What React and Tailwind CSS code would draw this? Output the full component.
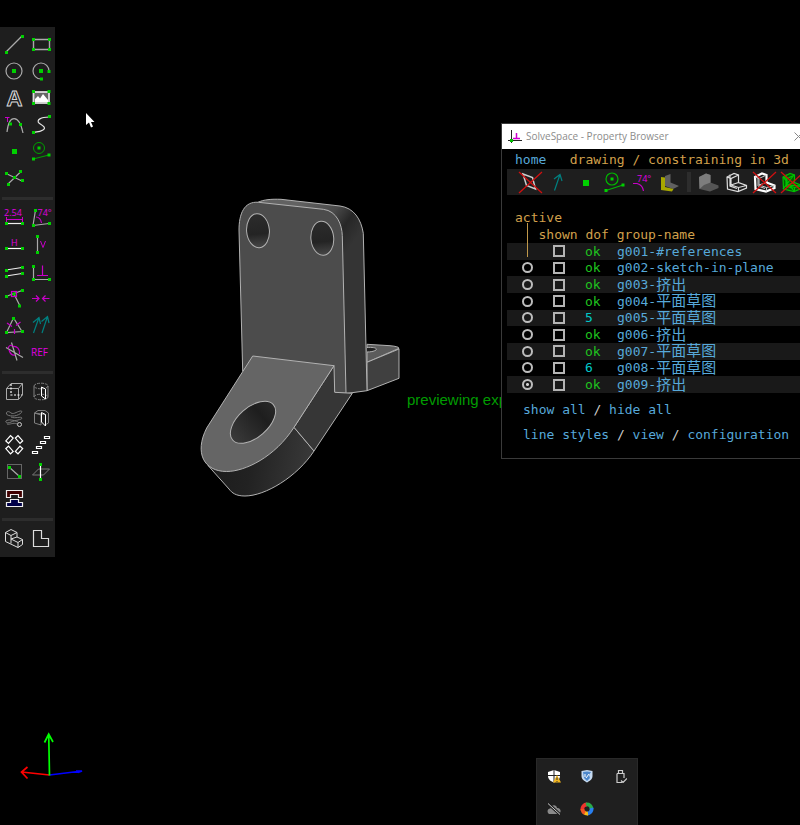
import React from "react";

const GREEN = "#00d000";
const MAGENTA = "#c800c8";

function Dots({ at, size = 3 }) {
  return at.map(([x, y]) => (
    <rect key={x + "-" + y} x={x - size / 2} y={y - size / 2} width={size} height={size} fill={GREEN} stroke="none" />
  ));
}

function Label({ x, y, size = 9, children }) {
  return (
    <text x={x} y={y} fontSize={size} fill="#e000e0" stroke="none" fontFamily="Open Sans, sans-serif">
      {children}
    </text>
  );
}

const sketchTools = [
  ["Line segment", <><path d="M6 22L22 6" /><Dots at={[[6.5, 22.5], [22.5, 6.5]]} /></>],
  ["Rectangle", <><path d="M6.500 9.500H22.500V19.500H6.500Z" strokeWidth="1.400" /><Dots at={[[6.5, 9.5], [22.5, 9.5], [6.5, 19.5], [22.5, 19.5]]} /></>],
  ["Circle", <><circle cx="14" cy="14" r="8" /><Dots at={[[14, 14]]} size={4} /></>],
  ["Arc", <><path d="M22 14A8 8 0 1 0 14 22" /><Dots at={[[14, 14]]} size={4} /><Dots at={[[22, 14.5], [14.5, 22]]} /></>],
  ["Text", <text x="14.500" y="22" textAnchor="middle" fontSize="22" fontWeight="bold" fontFamily="Liberation Sans, sans-serif" stroke="#d8d8d8" strokeWidth="1">A</text>],
  ["Image", <><rect x="6.500" y="8" width="15.500" height="11" fill="#666" stroke="#ddd" strokeWidth="1.800" /><path d="M8 18V15L11 12L13 14.500L16 10L21 16V18Z" fill="#fff" stroke="none" /><Dots at={[[6.5, 7.5], [22, 7.5], [6.5, 19.5], [22, 19.5]]} /></>],
  ["Tangent arc", <><path d="M7 21C9 3 19 3 23 22" /><path d="M5 6.500H9.500M7.500 6.500V11" stroke={MAGENTA} strokeWidth="1" /><Dots at={[[10.5, 13], [20.5, 13.5]]} /></>],
  ["Bezier spline", <><path d="M22 6C14 6 9 9 12 12C15 14 20 17 16 19C13 21 9 21 6 21.500" stroke="#e4e4e4" /><Dots at={[[22.5, 5.5], [6.5, 21.5]]} /></>],
  ["Point", <Dots at={[[14.5, 13.5]]} size={5} />],
  ["Construction", <g stroke="#00a000"><circle cx="12" cy="10" r="5.500" strokeWidth="1" /><path d="M6 21L22 17" /><Dots at={[[12, 10], [6.5, 21], [22, 17]]} /></g>],
  ["Split curves", <><path d="M6 8.500L22 16M8 19L21 6.500" /><Dots at={[[6.5, 8.5], [22.5, 15.5], [8.5, 19.5], [20.5, 6.5], [14.5, 12.5]]} /></>],
];

const constraintTools = [
  ["Distance", <><Label x="4" y="11.500">2.54</Label><path d="M6 15.500H22M6.500 13V18M22.500 13V18" stroke={MAGENTA} strokeWidth="1" /><path d="M6 19.500H22" stroke="#eee" /><Dots at={[[6.5, 19.5], [22.5, 19.5]]} /></>],
  ["Angle", <><Label x="10.500" y="11.500">74°</Label><path d="M6 21.500L8.500 6M6 21.500L22 19.500" /><path d="M9 13C12 13 14 16 14.500 19" stroke={MAGENTA} /><Dots at={[[8.5, 6.5], [6.5, 21.5], [22.5, 19.5]]} /></>],
  ["Horizontal", <><Label x="11" y="14.500">H</Label><path d="M6 17.500H22" stroke="#fff" /><Dots at={[[6.5, 17.5], [22.5, 17.5]]} /></>],
  ["Vertical", <><path d="M13.500 10L16 16.500L18.500 10" stroke={MAGENTA} strokeWidth="1" /><path d="M10.500 6V21" /><Dots at={[[10.5, 5.5], [10.5, 21.5]]} /></>],
  ["Parallel", <><path d="M6 12L22 9.500M6 18L22 15.500" stroke="#eee" /><Dots at={[[6.5, 12.5], [22.5, 9.5], [6.5, 18.5], [22.5, 15.5]]} /></>],
  ["Perpendicular", <><path d="M6.500 8V21.500H22" /><path d="M15.500 7.500V17.500M10 17.500H21" stroke={MAGENTA} /><Dots at={[[6.5, 8.5], [6.5, 21.5], [22.5, 21.5]]} /></>],
  ["Point on curve", <><path d="M6 11.500L22 5.500M14 9L20 21" /><rect x="11.500" y="6.500" width="5" height="5" stroke={MAGENTA} /><Dots at={[[6.5, 11.5], [22.5, 5.5], [14, 9], [19.5, 21]]} /></>],
  ["Symmetric", <path d="M5 13.500H12M9 10.500L12 13.500L9 16.500M22.500 13.500H15.500M18.500 10.500L15.500 13.500L18.500 16.500" stroke={MAGENTA} />],
  ["Equal length", <><path d="M13.500 6L6.500 20.500L22 19.500Z" /><path d="M7 11L12 14.500M20.500 10L16 13.500M14.500 17V22" stroke={MAGENTA} /><Dots at={[[13.5, 6.5], [6.5, 20.5], [22.5, 19.5]]} /></>],
  ["Same orientation", <path d="M6.500 21L12 5.500M6 10.500L12 5.500L13.500 12M15 21L20.500 4.500M14.500 9.500L20.500 4.500L22 11" stroke="#008080" />],
  ["Other supplementary angle", <><path d="M6 8.500L23 18.500M11.500 3.500L17 21.500" /><path d="M8 9.500C9 6 11 6 12.500 7M13 7.500C17 7 20 10 19.500 15M9 11C10 14 12 17 15 16" stroke={MAGENTA} /></>],
  ["Reference", <Label x="4" y="17" size={10}>REF</Label>],
];

const groupTools = [
  ["Extrude", <><path d="M6.500 10.500H18.500V21.500H6.500ZM6.500 10.500L11 5.500H22.500V17L18.500 21.500M18.500 10.500L22.500 5.500" stroke="#aaa" strokeWidth="1" /><path d="M11 6V17H22" stroke="#fff" strokeDasharray="2 1.500" /></>],
  ["Lathe", <><g stroke="#808080" strokeWidth="1"><ellipse cx="14" cy="8" rx="7" ry="2.800" strokeDasharray="3 1" /><path d="M7 8V19M21 8V19" /><ellipse cx="14" cy="19" rx="7" ry="2.800" strokeDasharray="3 1" /></g><path d="M14.500 9L18.500 11V21L14.500 18Z" stroke="#fff" strokeWidth="1" /></>],
  ["Helix", <><path d="M6.500 9C6 6 9 6 11 8C14 10 18 5.500 21.500 6C23 8 17 11 13 11C9 11 7 10 6.500 9M11 12C15 14 21 11 22 13C22 15 15 15 11 17C8 18.500 5 18 6 16C8 14 14 15 18 17M7 19C10 20 13 17 17 19" stroke="#777" strokeWidth="1" /><circle cx="19.500" cy="19.500" r="2" stroke="#ccc" strokeWidth="1" /></>],
  ["Revolve", <><path d="M7.500 8V18L14 20V10L7.500 8L11 5.500H18L21.500 8V18L18 20M7.500 8L18 9.500" stroke="#808080" strokeWidth="1" /><path d="M14.500 7.500L18.500 9.500V21L14.500 17Z" stroke="#fff" strokeWidth="1" /></>],
  ["Step rotating", <g stroke="#fff"><rect x="-3.500" y="-1.800" width="7" height="3.600" transform="translate(9.500 7.500) rotate(-48)" /><rect x="-3.500" y="-1.800" width="7" height="3.600" transform="translate(19 7.500) rotate(48)" /><rect x="-3.500" y="-1.800" width="7" height="3.600" transform="translate(9.500 18) rotate(48)" /><rect x="-3.500" y="-1.800" width="7" height="3.600" transform="translate(19 18) rotate(-48)" /></g>],
  ["Step translating", <path d="M17.500 4.500H22.500V6.500H17.500ZM13.500 9.500H18.500V11.500H13.500ZM9.500 14.500H14.500V16.500H9.500ZM5.500 19.500H10.500V21.500H5.500Z" stroke="#fff" />],
  ["Sketch in plane", <><rect x="7.500" y="5.500" width="14" height="14" stroke="#666" strokeWidth="1" /><path d="M9 8L19 17" /><Dots at={[[9.5, 8.5], [19.5, 17.5]]} /></>],
  ["Sketch in 3d", <><path d="M5.500 16L11.500 10H22.500L16.500 16Z" stroke="#777" strokeWidth="1" /><path d="M13.500 5V20" stroke="#fff" /><Dots at={[[13.5, 5.5], [13.5, 20.5]]} /></>],
  ["Link part", <><path d="M6.500 4.500H22.500V11.500H18.500V8.500H10.500V11.500H6.500Z" fill="#400000" stroke="#eee" /><path d="M10.500 13.500H18.500V16.500H22.500V20.500H6.500V16.500H10.500Z" fill="#000048" stroke="#eee" /></>],
];

const viewTools = [
  ["Nearest isometric view", <path d="M5.500 7.500L11 4.500L17 7.500L11 10.500ZM5.500 7.500V16.500L18 22.500L22.500 19.500V14.500L17 12V7.500M11 10.500V18.500M11 14L17 12M11 14L18 17.500V22.500M18 17.500L22.500 14.500" stroke="#ddd" strokeWidth="1" />],
  ["Nearest orthographic view", <path d="M6.500 5.500H14.500V13.500H21.500V21.500H6.500Z" stroke="#ddd" />],
];

function ToolGroup({ tools }) {
  return (
    <div className="grid w-[54px] grid-cols-2">
      {tools.map(([name, drawing]) => (
        <button key={name} type="button" aria-label={name} className="h-[27px] w-[27px]">
          <svg viewBox="0 0 27 27" className="block h-[27px] w-[27px]" fill="none" stroke="#aaa" strokeWidth="1.2">
            {drawing}
          </svg>
        </button>
      ))}
    </div>
  );
}

function Divider() {
  return (
    <div className="flex h-3 items-center px-0.5">
      <div className="h-[3px] w-full bg-[#2d2d2d]" />
    </div>
  );
}

function Toolbar() {
  return (
    <aside className="mt-[27px] w-[55px] self-start bg-[#1e1e1e] pt-[3px] pb-[5px]">
      <ToolGroup tools={sketchTools} />
      <Divider />
      <ToolGroup tools={constraintTools} />
      <Divider />
      <ToolGroup tools={groupTools} />
      <Divider />
      <ToolGroup tools={viewTools} />
    </aside>
  );
}

function Model() {
  return (
    <svg className="absolute top-[190px] left-[190px] h-[315px] w-[220px]" viewBox="190 190 220 315" role="img" aria-label="Bracket" strokeLinejoin="round">
      <defs>
        <linearGradient id="bend" x1="0" y1="0" x2="1" y2="0.1">
          <stop offset="0" stopColor="#1b1b1b" />
          <stop offset="0.45" stopColor="#222" />
          <stop offset="1" stopColor="#383838" />
        </linearGradient>
        <linearGradient id="bore" x1="0" y1="0" x2="1" y2="0">
          <stop offset="0" stopColor="#3a3a3a" />
          <stop offset="0.7" stopColor="#1e1e1e" />
          <stop offset="1" stopColor="#282828" />
        </linearGradient>
        <linearGradient id="drill" x1="0" y1="0" x2="0" y2="1">
          <stop offset="0" stopColor="#2c2c2c" />
          <stop offset="0.6" stopColor="#242424" />
          <stop offset="1" stopColor="#484848" />
        </linearGradient>
        <linearGradient id="edge" x1="300" y1="200" x2="355" y2="240" gradientUnits="userSpaceOnUse">
          <stop offset="0" stopColor="#626262" />
          <stop offset="0.5" stopColor="#4a4a4a" />
          <stop offset="0.75" stopColor="#272727" />
          <stop offset="1" stopColor="#343434" />
        </linearGradient>
      </defs>
      <g stroke="#b2b2b2" strokeWidth="1">
        <path d="M367 344.300L390 345.700Q399 346.500 399 348.300L367 362.300Z" fill="#5c5c5c" />
        <path d="M367 362.300L399 349V378.300L367 390.700Z" fill="#404040" />
        <path d="M367 347.500C373 347 378 348 376 350C374 351.500 370 352 367 352" fill="#222" />
        <path d="M258 202.300C264 199.500 271 199 281 199.300L340 206C354 208 361 219 363.300 233.300L367 390.700L346 393.500L300 300Z" fill="url(#edge)" />
        <path d="M242.700 371L239 230C239 214 244 201 258.500 202.300L323.300 209.300C337 211 342 225 342.300 235.700L346 393.300L334.700 392.500L330 366Z" fill="#4c4c4c" />
        <g fill="url(#drill)">
          <ellipse cx="258" cy="230.700" rx="11.400" ry="17" transform="rotate(-5 258 230.700)" />
          <ellipse cx="322.300" cy="238.300" rx="11.400" ry="17" transform="rotate(-5 322.300 238.300)" />
        </g>
        <path d="M294 427.300L314 451C297 477 265 496 245 496C236 496 232 493 229 489L208 465.500Z" fill="url(#bend)" />
        <path d="M334 365.700L334.700 392.300L352.300 393.300L314 451L294 427.300Z" fill="#363636" />
        <path d="M252.700 356L334 365.700L294 427.300C275 457 245 471.500 226.700 471.500C204 471.500 194 453 206.700 428Z" fill="#656565" />
        <ellipse cx="253" cy="422.300" rx="27" ry="15" transform="rotate(-41 253 422.300)" fill="url(#bore)" />
      </g>
    </svg>
  );
}

function Axes() {
  return (
    <svg className="absolute top-[728px] left-[16px] h-[52px] w-[72px]" viewBox="16 728 72 52" fill="none" strokeWidth="1.700" role="img" aria-label="Axes">
      <path d="M49.500 775L82 771M76 771L82 771L78 772.500" stroke="#0000ff" />
      <path d="M49.500 775L21.500 772M27.500 767L21.500 772L27.500 778.500" stroke="#ff0000" />
      <path d="M49.500 775.500L48.700 734M44.500 742.500L48.700 734L53 742" stroke="#00ff00" />
    </svg>
  );
}

const block = "M5 8L12 4.500L16.500 6V13.500L24.500 16.500V19L16 22.500L5.500 20Z";
const blockEdges = "M5 8L9 9.500L16.500 6M9 9.500V16L16.500 13.500M9 16L16.500 18.500L24.500 16.500M16.500 18.500V22.500M8 5.500V17L15 19.500";
const cross = <path d="M3 3L26 24M26 3L3 24" stroke="#d01010" strokeWidth="1.300" />;

const visibility = [
  ["Workplanes", <><path d="M7 5L16.500 8.500L19.500 20L10.500 16.500Z" stroke="#ccc" strokeWidth="1.500" />{cross}</>],
  ["Normals", <path d="M10.500 21.500L16 5.500M10 10L16 5.500L18 12" stroke="#008080" />],
  ["Points", <Dots at={[[14, 14]]} size={6} />],
  ["Construction entities", <g stroke="#00b800"><circle cx="12" cy="10" r="6" /><path d="M6 21.500L23 16" /><Dots at={[[12, 10], [6, 21.5], [23, 16]]} /></g>],
  ["Constraints", <><Label x="9" y="13">74°</Label><path d="M5 14.500H9C13 15.500 15 18 15.500 22" stroke={MAGENTA} /></>],
  ["Faces", <><path d="M9 7L14.500 5V13.500L23 17L17 20L9 17Z" fill="#606060" stroke="none" /><path d="M5 8L9 8.500V18L17.500 20L16 22.500L5 21Z" fill="#a8a800" stroke="none" /></>],
];

const rendering = [
  ["Shaded", <><path d={block} fill="#555" stroke="none" /><path d="M5 8L12 4.500L16.500 6V13.500L10 16L5.500 20Z" fill="#7d7d7d" stroke="none" /></>],
  ["Edges", <path d={block + blockEdges} stroke="#ddd" />],
  ["Outlines", <><path d={block} stroke="#fff" strokeWidth="2.200" /><path d={blockEdges} stroke="#ccc" strokeWidth="1" />{cross}</>],
  ["Mesh", <><path d={block} fill="#006000" stroke="#00c000" /><path d={blockEdges + "M5 8L16 22M5 20L16 6M9 16L24 17"} stroke="#00c000" />{cross}</>],
];

function IconRow({ items }) {
  return items.map(([name, drawing]) => (
    <button key={name} type="button" aria-label={name} className="h-[26px] w-7 shrink-0">
      <svg viewBox="0 0 28 26" className="block h-[26px] w-7" fill="none" stroke="#ccc" strokeWidth="1.200">
        {drawing}
      </svg>
    </button>
  ));
}

const groups = [
  ["ok", "g001-#references"],
  ["ok", "g002-sketch-in-plane"],
  ["ok", "g003-挤出"],
  ["ok", "g004-平面草图"],
  ["5", "g005-平面草图"],
  ["ok", "g006-挤出"],
  ["ok", "g007-平面草图"],
  ["6", "g008-平面草图"],
  ["ok", "g009-挤出"],
];

function GroupName({ text }) {
  const [id, name] = text.split(/(?<=-)(?=[^\x00-\x7f])/);
  return (
    <a href="#group" className="flex h-4 items-center text-[#57a9da]">
      {id}
      {name && <span className="text-[15px] leading-4">{name}</span>}
    </a>
  );
}

function GroupTable() {
  return (
    <div className="relative pl-[5px]">
      <table className="h-[150px] w-full table-fixed border-collapse">
        <colgroup>
          <col className="w-9" />
          <col className="w-[42px]" />
          <col className="w-8" />
          <col />
        </colgroup>
        <tbody>
          {groups.map(([dof, name], i) => (
            <tr key={name} className="odd:bg-[#191919]">
              <td className="p-0 pl-[15px] leading-none">
                {i > 0 && (
                  <input
                    type="radio"
                    name="active"
                    aria-label={"activate " + name}
                    defaultChecked={i === 8}
                    className="block h-[11px] w-[11px] appearance-none rounded-full border-2 border-[#bdbdbd] checked:bg-[radial-gradient(circle,#d0d0d0_1px,transparent_2px)]"
                  />
                )}
              </td>
              <td className="p-0 pl-2.5 leading-none">
                <input type="checkbox" aria-label={"show " + name} className="block h-3 w-3 appearance-none border-2 border-[#b4b4b4]" />
              </td>
              <td className={dof === "ok" ? "p-0 leading-none text-[#1fc41f]" : "p-0 leading-none text-[#00c8c8]"}>{dof}</td>
              <td className="p-0 leading-none whitespace-nowrap">
                <GroupName text={name} />
              </td>
            </tr>
          ))}
        </tbody>
      </table>
      <div className="absolute -top-5 left-[25px] h-[34px] w-px bg-[#c0984a]" />
    </div>
  );
}

function BrowserWindow() {
  return (
    <section className="absolute top-[123px] -right-1 w-[303px] border border-[#3a3a3a] bg-black font-['DejaVu_Sans_Mono','Noto_Sans_CJK_SC',monospace] text-[13px] text-[#d2a14c]">
      <header className="flex h-[25px] items-center bg-white pl-1.5 font-['Open_Sans',sans-serif] text-[10px] text-[#8c8c8c]">
        <svg viewBox="0 0 14 14" className="mr-1 h-3.5 w-3.5" fill="none">
          <path d="M3.500 0V13M0 10.500H14" stroke="#222" />
          <path d="M8.500 3V8M5 8.500H12" stroke="#d000d0" strokeWidth="1.500" />
          <rect x="2" y="9" width="3" height="3" fill="#00c000" />
        </svg>
        <h1 className="whitespace-nowrap">SolveSpace - Property Browser</h1>
        <button type="button" aria-label="Close" className="ml-auto">
          <svg viewBox="0 0 9 9" className="block h-[9px] w-[9px]" stroke="#888" fill="none">
            <path d="M0.500 0.500L8.500 8.500M8.500 0.500L0.500 8.500" />
          </svg>
        </button>
      </header>
      <nav className="flex h-5 items-center pt-0.5 pl-[13px] whitespace-pre">
        <a href="#home" className="text-[#57a9da]">home</a>
        <span>{"   drawing / constraining in 3d"}</span>
      </nav>
      <div className="ml-[5px] flex h-[26px] items-center overflow-hidden bg-[#1e1e1e] pl-[9px]">
        <IconRow items={visibility} />
        <div className="mx-[3px] h-5 w-1 shrink-0 bg-[#2d2d2d]" />
        <IconRow items={rendering} />
      </div>
      <div className="pt-3.5 pl-[13px] leading-[17px] whitespace-pre">
        <p>active</p>
        <p>{"   shown dof group-name"}</p>
      </div>
      <GroupTable />
      <p className="flex h-[34px] items-center pl-[21px] whitespace-pre">
        <a href="#show" className="text-[#57a9da]">show all</a>
        <span className="text-[#ccc]"> / </span>
        <a href="#hide" className="text-[#57a9da]">hide all</a>
      </p>
      <p className="flex h-[31px] items-start pl-[21px] leading-4 whitespace-pre">
        <a href="#styles" className="text-[#57a9da]">line styles</a>
        <span className="text-[#ccc]"> / </span>
        <a href="#view" className="text-[#57a9da]">view</a>
        <span className="text-[#ccc]"> / </span>
        <a href="#configuration" className="text-[#57a9da]">configuration</a>
      </p>
    </section>
  );
}

const trayIcons = [
  ["Security", <><path d="M7 1L13 3V7C13 10.500 10 12.500 7 13.500C4 12.500 1 10.500 1 7V3Z" fill="#fff" /><path d="M7 1V13M1 6.500H13" stroke="#222" /><path d="M10 6L14 13.500H6Z" fill="#f2b51d" /><path d="M10 8.500V11M10 12V13" stroke="#333" /></>],
  ["Guard", <><path d="M1.500 2L7 1L12.500 2V7C12.500 10.500 9.500 12 7 13.500C4.500 12 1.500 10.500 1.500 7Z" fill="#c4d9f0" /><path d="M3 3L7 2.500L11 3L9 6L10 9L7 12L4 9Z" fill="#4d88cc" /><path d="M5 5V8M9 5L6 9" stroke="#fff" /></>],
  ["USB device", <path d="M5.500 4.500V1.500H9.500V4.500M4 4.500H11V9M4 4.500V13.500H9M8 11.500L10 13.500L14 9.500" fill="none" stroke="#ccc" strokeWidth="1.200" />],
  ["Cloud offline", <><path d="M1 11C-0.500 8 2 6 3.500 6.500C4 2.500 9.500 2 10 6C13.500 5.500 15 10 12 12H2Z" fill="#8a8a8a" /><path d="M1 1.500L13 12.500" stroke="#1e1e1e" strokeWidth="3" /><path d="M1 1.500L13 12.500" stroke="#ccc" /></>],
  ["Color wheel", <g fill="none" strokeWidth="3.800"><path d="M2.500 8A4.500 4.500 0 0 1 7 2.500" stroke="#ed342c" /><path d="M6 2.500A4.500 4.500 0 0 1 11.500 7" stroke="#2aaa4b" /><path d="M11.500 6A4.500 4.500 0 0 1 7 11.500" stroke="#287ff0" /><path d="M8 11.500A4.500 4.500 0 0 1 4 10" stroke="#f7bd17" /><path d="M5 11A4.500 4.500 0 0 1 2.500 7" stroke="#f05323" /></g>],
];

function Tray() {
  return (
    <div className="absolute bottom-0 left-[536px] grid w-[102px] grid-cols-3 border-x border-t border-[#292929] bg-[#1f1f1f]">
      {trayIcons.map(([name, drawing]) => (
        <button key={name} type="button" aria-label={name} className="flex h-[33px] items-center justify-center">
          <svg viewBox="0 0 14 14" className="h-3.5 w-3.5">{drawing}</svg>
        </button>
      ))}
    </div>
  );
}

export default function App() {
  return (
    <main className="relative flex min-h-screen overflow-hidden bg-black">
      <Toolbar />
      <Model />
      <p className="absolute top-[391px] left-[407px] font-['Liberation_Sans',sans-serif] text-[15px] leading-[18px] text-[#009c00]">previewing exp</p>
      <Axes />
      <BrowserWindow />
      <Tray />
      <svg className="absolute top-[112px] left-[85px] h-[17px] w-[11px]" viewBox="0 0 11 17">
        <path d="M1 1V13L4 10.500L6 15.500L8 14.500L6 10H9.500Z" fill="#fff" />
      </svg>
    </main>
  );
}
